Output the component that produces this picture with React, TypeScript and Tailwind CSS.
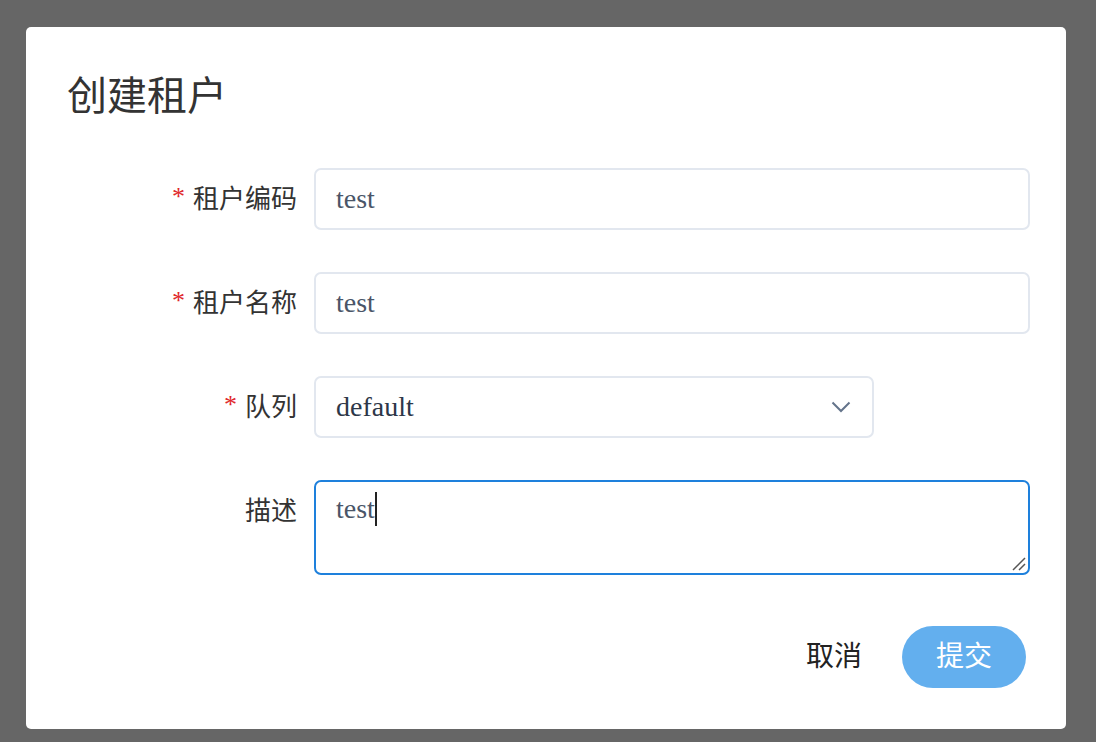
import React from "react";

const font = { fontFamily: '"Liberation Serif", "Noto Sans CJK SC", serif' };

function Label({ text, required }: { text: string; required?: boolean }) {
  return (
    <div className="w-[288px] shrink-0 flex justify-end items-center h-[62px] pr-[17px] text-[26px] text-[#333]">
      {required && <span className="text-[#e0262a] text-[26px] mr-[8px] -mt-[6px]">*</span>}
      <span>{text}</span>
    </div>
  );
}

export default function App() {
  return (
    <div className="w-[1096px] h-[742px] bg-[#666666] pt-[27px] pl-[26px]" style={font}>
      <div className="w-[1040px] h-[702px] bg-white rounded-[5px] flex flex-col">
        <div className="pl-[41px] pt-[42px] h-[141px] text-[40px] leading-[56px] text-[#333]">创建租户</div>
        <div className="flex flex-col gap-[42px]">
          <div className="flex items-start">
            <Label text="租户编码" required />
            <div className="w-[716px] h-[62px] border-2 border-[#e2e7ef] rounded-[7px] flex items-center px-[20px] text-[28px] text-[#4a5568]">test</div>
          </div>
          <div className="flex items-start">
            <Label text="租户名称" required />
            <div className="w-[716px] h-[62px] border-2 border-[#e2e7ef] rounded-[7px] flex items-center px-[20px] text-[28px] text-[#4a5568]">test</div>
          </div>
          <div className="flex items-start">
            <Label text="队列" required />
            <div className="w-[560px] h-[62px] border-2 border-[#e2e7ef] rounded-[7px] flex items-center justify-between pl-[20px] pr-[21px] text-[28px] text-[#2d3748]">
              <span>default</span>
              <svg width="20" height="12" viewBox="0 0 20 12" fill="none">
                <path d="M1.5 1.5 L10 10 L18.5 1.5" stroke="#64748b" strokeWidth="2" />
              </svg>
            </div>
          </div>
          <div className="flex items-start">
            <Label text="描述" />
            <div className="relative w-[716px] h-[95px] border-2 border-[#1e80dc] rounded-[7px] px-[20px] pt-[10px] text-[28px] text-[#4a5568] leading-[34px]">
              <span>test</span>
              <span className="inline-block w-[2px] h-[34px] bg-[#222] align-top" />
              <svg className="absolute right-[2px] bottom-[2px]" width="16" height="16" viewBox="0 0 16 16">
                <path d="M3 15 L15 3 M9 15 L15 9" stroke="#555" strokeWidth="1.5" />
              </svg>
            </div>
          </div>
        </div>
        <div className="flex justify-end items-center mt-[51px] pr-[40px] gap-[40px]">
          <span className="text-[28px] text-[#222]">取消</span>
          <div className="w-[124px] h-[62px] rounded-full bg-[#63afee] text-white text-[28px] flex items-center justify-center">提交</div>
        </div>
      </div>
    </div>
  );
}
